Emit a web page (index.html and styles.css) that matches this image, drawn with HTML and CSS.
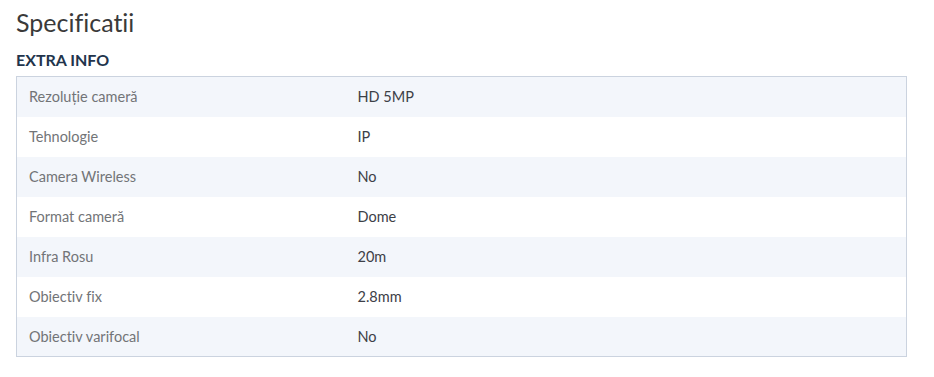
FILE: index.html
```html
<!DOCTYPE html>
<html lang="ro">
  <head>
    <meta charset="UTF-8" />
    <meta name="viewport" content="width=device-width, initial-scale=1.0" />
    <title>Specificatii</title>
    <link rel="stylesheet" href="styles.css">
  </head>
  <body>
    <section class="specs">
      <h2 class="specs-title">Specificatii</h2>
      <h3 class="specs-group">EXTRA INFO</h3>
      <table class="specs-table">
        <tbody>
          <tr><th>Rezoluție cameră</th><td>HD 5MP</td></tr>
          <tr><th>Tehnologie</th><td>IP</td></tr>
          <tr><th>Camera Wireless</th><td>No</td></tr>
          <tr><th>Format cameră</th><td>Dome</td></tr>
          <tr><th>Infra Rosu</th><td>20m</td></tr>
          <tr><th>Obiectiv fix</th><td>2.8mm</td></tr>
          <tr><th>Obiectiv varifocal</th><td>No</td></tr>
        </tbody>
      </table>
    </section>
  </body>
</html>
```

FILE: styles.css
```css
*,
*::before,
*::after {
  box-sizing: border-box;
}
:root {
  --clr-text: #3d4047;
  --clr-muted: #727477;
  --clr-heading: #22344c;
  --clr-border: #cbd3df;
  --clr-stripe: #f3f6fb;
  --ff-base: Lato, "Noto Sans", sans-serif;
}
body {
  margin: 0;
  font-family: var(--ff-base);
  font-variant-ligatures: none;
  color: var(--clr-text);
  background-color: #fff;
}
.specs {
  padding: 6px 27px 0 16px;
}
.specs-title {
  margin: 0;
  font-size: 25px;
  font-weight: 400;
  line-height: 32px;
  color: #3a3a3a;
}
.specs-group {
  margin: 13px 0 7px;
  font-size: 16px;
  font-weight: 700;
  line-height: 18px;
  color: var(--clr-heading);
}
.specs-table {
  width: 100%;
  border-collapse: collapse;
  border: 1px solid var(--clr-border);
  font-size: 14.5px;
}
.specs-table tr:nth-child(odd) {
  background-color: var(--clr-stripe);
}
.specs-table th,
.specs-table td {
  height: 40px;
  padding: 0 12px;
  text-align: left;
  vertical-align: middle;
}
.specs-table th {
  width: 329px;
  font-weight: 400;
  color: var(--clr-muted);
}
.specs-table td {
  color: var(--clr-text);
}
```
